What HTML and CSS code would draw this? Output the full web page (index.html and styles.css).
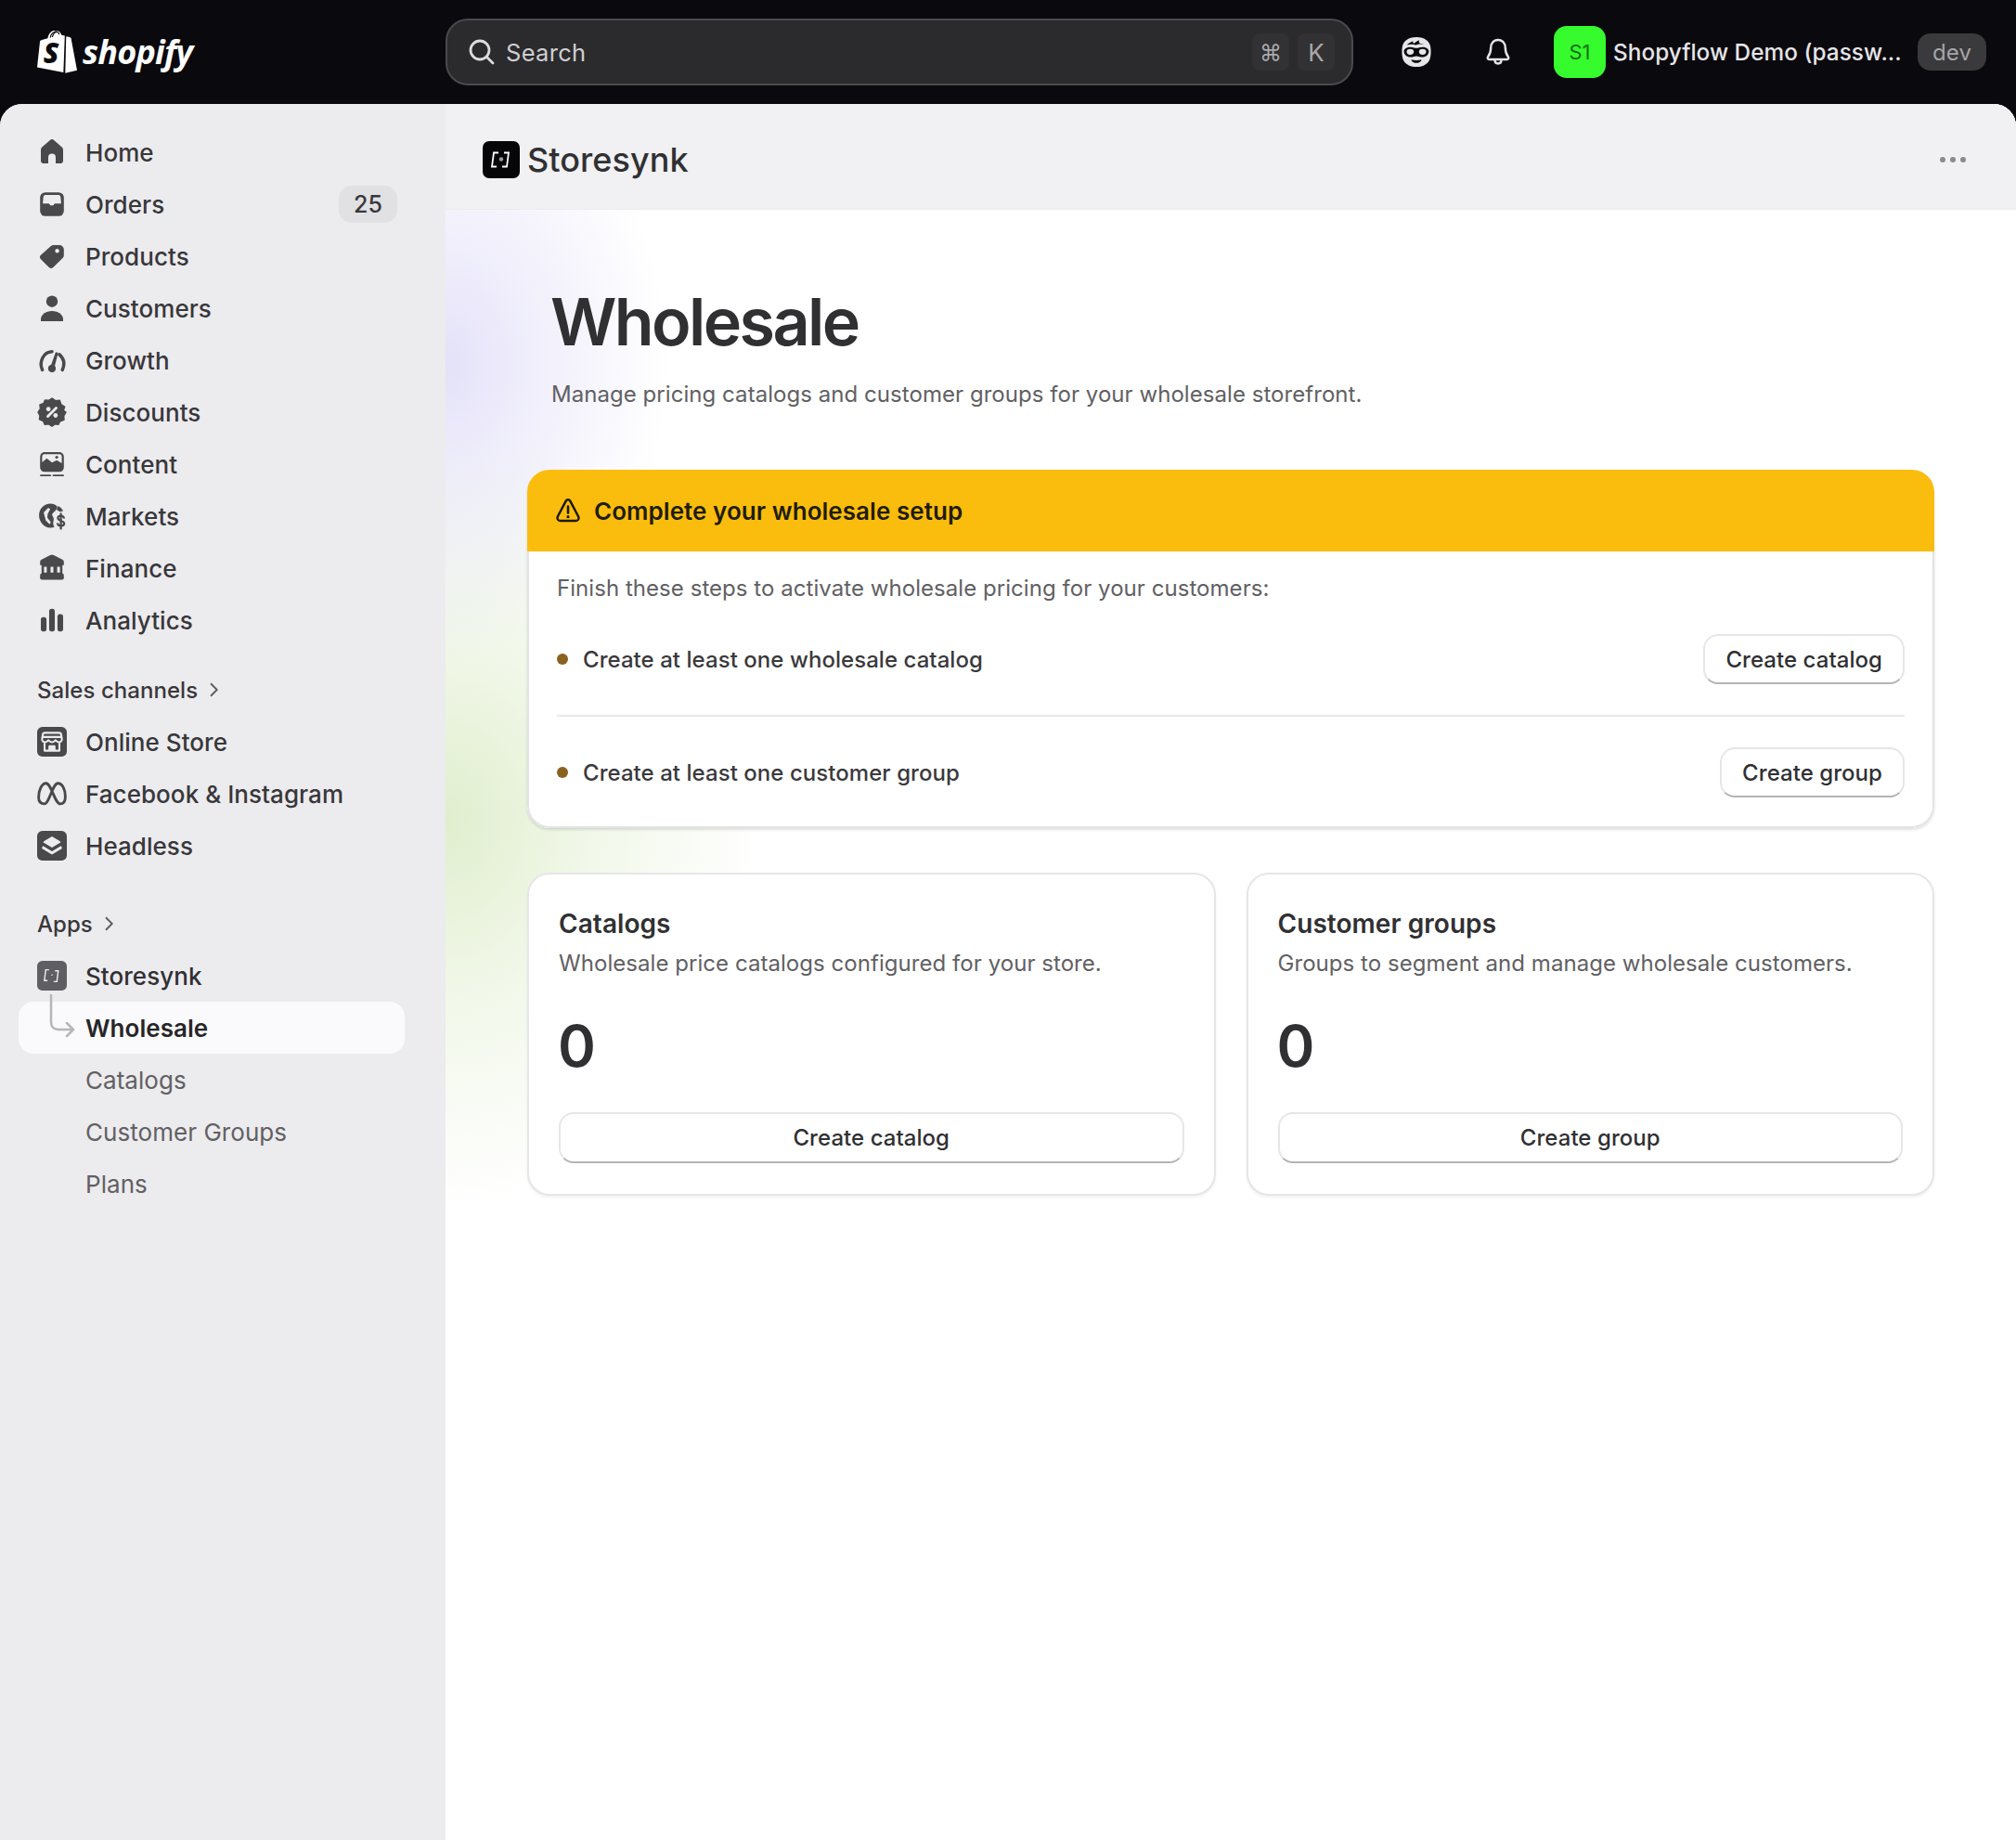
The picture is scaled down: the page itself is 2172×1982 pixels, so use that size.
FILE: index.html
```html
<!DOCTYPE html>
<html lang="en">
<head>
<meta charset="utf-8">
<title>Wholesale · Storesynk</title>
<link rel="stylesheet" href="styles.css">
</head>
<body>
<header class="topbar">
  <div class="brand">
    <svg class="brand-bag" viewBox="0 0 44 48"><path d="M30.500 6.600 27 5.800C26 3 24.300 1.200 22 1.200c-.6 0-.9.200-1.200.5C18.500-.5 13.500 1.500 11.600 9.300L5.300 11.300C3.300 11.900 3.300 12 3 13.900L0 41.500 29 47z" fill="#fff"/><path d="M32 7.400 36 8.200l1.400 1.200L44 44.700 31 47.800z" fill="#fff"/><path d="M14.500 8.800c1.200-4.800 3.700-6.800 6-6.500M24.500 5.200c-.5-1.500-1.300-2.800-2.700-2.800-2.500 0-4.300 2.600-5 5.600" fill="none" stroke="#0b0a0e" stroke-width="1.200"/><text x="7" y="37" class="brand-s">S</text></svg>
    <span class="brand-name">shopify</span>
  </div>
  <div class="search">
    <svg class="search-icon" viewBox="0 0 28 28"><circle cx="12" cy="12" r="10" fill="none" stroke="currentColor" stroke-width="2.800"/><path d="M19.500 19.500 26 26" stroke="currentColor" stroke-width="2.800" stroke-linecap="round"/></svg>
    <span class="search-label">Search</span>
    <span class="kbd">⌘</span>
    <span class="kbd kbd-key">K</span>
  </div>
  <svg class="top-icon sidekick" viewBox="3.500 .8 25 30.700" preserveAspectRatio="none"><path fill="#e6e5e8" d="M16 .8c7 0 11.500 4.500 12 11 .3 4 .3 7.500-.5 11C26.300 28 22 31.500 16 31.500S5.700 28 4.500 22.800c-.8-3.500-.8-7-.5-11C4.500 5.300 9 .8 16 .8Z"/><path fill="#0a090d" d="M5.500 15.500c0-2.800 2.500-4.500 5.500-4.500 2 0 3.500 1 5 1s3-1 5-1c3 0 5.500 1.700 5.500 4.500 0 3.500-2.500 6-5.500 6-2.200 0-3.500-1-5-1s-2.800 1-5 1c-3 0-5.500-2.500-5.500-6Z"/><circle cx="10.800" cy="16" r="3" fill="#e6e5e8"/><circle cx="21.200" cy="16" r="3" fill="#e6e5e8"/><path fill="#0a090d" d="M11.500 24c2.800 1 6.200 1 9 0-.8 2.500-2.500 3.500-4.500 3.500s-3.700-1-4.500-3.500ZM8 9c2-3 5-4 5-4l.5 2.500L18 4l.5 3 4 1.500c-3-1-5.500-.5-7 .5-2-1-5-1-7.500 0Z"/></svg>
  <svg class="top-icon bell" viewBox="0 0 32 32"><path fill="none" stroke="#e6e5e8" stroke-width="2.400" stroke-linejoin="round" d="M16 3c-5 0-7.800 4-7.800 8.500 0 5-1 7-3 9.500-1 1.300-.5 3 1.500 3h18.600c2 0 2.500-1.700 1.500-3-2-2.500-3-4.500-3-9.500C23.800 7 21 3 16 3Z"/><path fill="none" stroke="#e6e5e8" stroke-width="2.400" stroke-linecap="round" d="M12.500 24.500c0 2.500 1.500 4 3.500 4s3.500-1.500 3.500-4"/></svg>
  <div class="store">
    <span class="avatar">S1</span>
    <span class="store-name">Shopyflow Demo (passw...</span>
    <span class="dev">dev</span>
  </div>
</header>

<div class="shell">
  <aside class="sidebar">
    <nav class="nav-group">
      <a class="nav-item"><svg class="ico" viewBox="0 0 20 20"><path d="M8.500 2 3.300 6.600A2.500 2.500 0 0 0 2.500 8.400V16A1.500 1.500 0 0 0 4 17.500h3.500v-4a2.500 2.500 0 0 1 5 0v4H16a1.500 1.500 0 0 0 1.500-1.500V8.400a2.500 2.500 0 0 0-.8-1.800L11.500 2a2.200 2.200 0 0 0-3 0Z"/></svg>Home</a>
      <a class="nav-item"><svg class="ico" viewBox="0 0 20 20"><rect x="2" y="2" width="16" height="16" rx="3.500"/><path class="cut" d="M3.800 9.500 4.200 5c.1-1 .8-1.300 1.800-1.300h8c1 0 1.700.3 1.800 1.300l.4 4.500h-3.700c-.6 0-.9.200-1.200.7l-.4.600H8.900l-.4-.6c-.3-.5-.6-.7-1.200-.7Z"/></svg>Orders<span class="count">25</span></a>
      <a class="nav-item"><svg class="ico" viewBox="0 0 20 20"><path fill-rule="evenodd" d="M11.200 2.500H15A3 3 0 0 1 18 5.500v3.800a2.600 2.600 0 0 1-.8 1.900l-6.400 6.300a2 2 0 0 1-2.800 0l-5.500-5.500a2 2 0 0 1 0-2.800l6.800-6a3 3 0 0 1 1.900-.7ZM13.500 5a1.400 1.400 0 1 0 0 2.800 1.400 1.400 0 0 0 0-2.800Z"/></svg>Products</a>
      <a class="nav-item"><svg class="ico" viewBox="0 0 20 20"><circle cx="10" cy="5.400" r="3.900"/><path d="M2.500 18.800v-1.300c0-3.200 3.300-5.600 7.500-5.600s7.500 2.400 7.500 5.600v1.300Z"/></svg>Customers</a>
      <a class="nav-item"><svg class="ico" viewBox="0 0 20 20"><path class="line" d="M3.500 16.500C1 11 4.300 4.500 10 4.200M15 6.200c3.300 3 3.500 7 2 10.300" stroke-width="2.200"/><path d="M12.500 4.500 14.200 5 11.900 13.800A2.600 2.600 0 1 1 9.500 13Z"/></svg>Growth</a>
      <a class="nav-item"><svg class="ico" viewBox="0 0 20 20"><path d="M10 .8 12.300 2.400 15.100 2.200 16 4.900 18.400 6.400 17.500 9 19.200 10 17.800 12.600 18 15 15.400 16 14.200 18.200 11.800 17.900 10 19.300 8 17.900 5.300 18.200 4.200 15.900 1.700 14.800 2 12.200.8 10 2.300 7.800 2 5.100 4.500 4.100 5.400 2 8 2.200Z" stroke="#49484b" stroke-width="1.200" stroke-linejoin="round"/><path class="cut-line" d="M12.800 7.200 7.200 12.800" stroke-width="1.800"/><circle class="cut" cx="7.600" cy="7.900" r="1.500"/><circle class="cut" cx="12.400" cy="12.200" r="1.500"/></svg>Discounts</a>
      <a class="nav-item"><svg class="ico" viewBox="0 0 20 20"><rect x="2" y="1.900" width="16" height="13.300" rx="3"/><path class="cut" d="M3.400 8.800V4.800A1.500 1.500 0 0 1 4.900 3.300H15.100A1.500 1.500 0 0 1 16.600 4.800V9.400L13.200 7.400 10 8.900 6.500 6.100Z"/><circle cx="13.200" cy="5.300" r="1"/><path class="line" d="M2.500 17.600h6.300M11 17.600h6.500" stroke-width="1.200"/></svg>Content</a>
      <a class="nav-item"><svg class="ico" viewBox="0 0 20 20"><path d="M9 1.500C4.500 1.500 1.300 5 1.300 9.500S4.800 17.800 9 17.800c1 0 1.800-.2 2.600-.5-.6-1.200-1.100-2.600-.6-3.900.6-1.600-.3-3-.9-4-.3-.5.600-1.500 1.400-2.300 1-.9 2.100-2.200 2.100-3.700C12.400 2.300 10.800 1.500 9 1.500Z"/><path class="cut" d="M4.400 7.500 7.500 4.300l1.300 1L7.200 8.300 6.800 11 9.200 14 8.400 15.500 5.800 12.800Z"/><path class="line" d="M18 11c-.4-1-1-1.300-2-1.300-1.200 0-2 .6-2 1.600 0 2.300 4.200 1.300 4.200 3.600 0 1-.9 1.700-2.200 1.700-1.100 0-1.800-.5-2.200-1.400M16 8.300v10.200" stroke-width="1.400"/><path d="M14.200 3.200c1.700 1 2.600 2 3.300 3.300l-2.200.5-2.200-1.400Z"/></svg>Markets</a>
      <a class="nav-item"><svg class="ico" viewBox="0 0 20 20"><path d="M8.800 1.300 3 4.200C2.400 4.500 2 5.100 2 5.800V8h16V5.800c0-.7-.4-1.300-1-1.600L11.200 1.300a2.800 2.800 0 0 0-2.400 0Z"/><rect x="3" y="7.500" width="14" height="7"/><rect x="2" y="13.500" width="16" height="4.300" rx="1.300"/><path class="cut" d="M4.600 9h1.900v4H4.600Zm4.450 0h1.900v4h-1.900Zm4.450 0h1.900v4h-1.900Z"/></svg>Finance</a>
      <a class="nav-item"><svg class="ico" viewBox="0 0 20 20"><rect x="2.500" y="8" width="3.800" height="9.700" rx="1.700"/><rect x="8.100" y="2.300" width="3.800" height="15.400" rx="1.700"/><rect x="13.700" y="6" width="3.800" height="11.700" rx="1.700"/></svg>Analytics</a>
    </nav>

    <div class="nav-heading nav-heading-sales">Sales channels<svg class="chev" viewBox="0 0 12 12"><path d="M4 1.500 8.500 6 4 10.500"/></svg></div>
    <nav class="nav-group">
      <a class="nav-item"><svg class="ico" viewBox="0 0 20 20"><rect width="20" height="20" rx="3.500"/><path class="cut-line" d="M5.200 4h9.600c.9 0 1.300.5 1.400 1.200l.5 3c.1 1.300-1 2.100-2 2.100-1 0-1.700-.6-2.300-1.300-.6.700-1.400 1.300-2.400 1.300S8.200 9.700 7.600 9c-.6.700-1.300 1.300-2.300 1.300-1 0-2.100-.8-2-2.100l.5-3C3.900 4.500 4.300 4 5.200 4ZM3.800 6.800h12.400M5 10.500V16h10v-5.500" stroke-width="1.300"/><path class="cut" d="M7.600 16v-2.800c0-.5.400-.9.900-.9h3c.5 0 .9.400.9.900V16Z"/></svg>Online Store</a>
      <a class="nav-item"><svg class="ico" viewBox="0 0 20 20"><path class="line" d="M1 12.500C1 8 3 3 6 3c3.500 0 6 13.800 9.500 13.800 2 0 3.500-1.500 3.500-5 0-4.500-2-8.800-5-8.800-3.500 0-6 13.800-9 13.800C2.500 16.800 1 15.500 1 12.500Z" stroke-width="1.800"/></svg>Facebook &amp; Instagram</a>
      <a class="nav-item"><svg class="ico" viewBox="0 0 20 20"><rect width="20" height="20" rx="3.500"/><path class="cut" d="M10 3.800 15.500 7c.4.300.4.800 0 1l-5.500 3.200L4.500 8c-.4-.2-.4-.7 0-1Z"/><path class="cut" d="M4 10.200 10 13.700l6-3.500.6.900c.3.300.2.700-.1.900L10 16 3.500 12c-.3-.2-.4-.6-.1-.9Z"/></svg>Headless</a>
    </nav>

    <div class="nav-heading nav-heading-apps">Apps<svg class="chev" viewBox="0 0 12 12"><path d="M4 1.500 8.500 6 4 10.500"/></svg></div>
    <nav class="nav-group">
      <a class="nav-item nav-item-strong"><svg class="ico" viewBox="0 0 20 20"><rect width="20" height="20" rx="3.500" fill="#5f5e62"/><path class="app-mark" d="M8 6H5.800L4.900 13.300H7M12 6.700h2.200L13.300 14h-2.200" stroke-width=".9"/><circle class="cut" cx="10" cy="9.500" r=".5"/></svg>Storesynk</a>
      <a class="nav-item nav-item-active"><svg class="connector" viewBox="0 0 40 60"><path d="M2 0v30c0 5 3 8 8 8h15M19 31l7 7-7 7"/></svg>Wholesale</a>
      <a class="nav-item nav-item-sub">Catalogs</a>
      <a class="nav-item nav-item-sub">Customer Groups</a>
      <a class="nav-item nav-item-sub">Plans</a>
    </nav>
  </aside>

  <main class="main">
    <div class="app-bar">
      <svg class="app-logo" viewBox="0 0 40 40"><rect width="40" height="40" rx="7" fill="#060507"/><path d="M17 12.500h-5L10 27.500h5M23 12.500h5l-2 15h-5" fill="none" stroke="#fff" stroke-width="1.800"/><circle cx="20" cy="19.500" r="2.200" fill="#9c9c9e"/></svg>
      <span class="app-title">Storesynk</span>
      <span class="dots"><i></i><i></i><i></i></span>
    </div>
    <div class="page">
      <h1 class="page-title">Wholesale</h1>
      <p class="page-sub">Manage pricing catalogs and customer groups for your wholesale storefront.</p>

      <section class="setup">
        <div class="setup-head">
          <svg class="warn" viewBox="0 0 28 28"><path d="M11.600 3.800 2.800 20.500c-1 2 .3 4.500 2.700 4.500h17c2.400 0 3.700-2.500 2.700-4.500L16.400 3.800c-1-2-3.800-2-4.800 0Z" fill="none" stroke="#1d1a08" stroke-width="2.500" stroke-linejoin="round"/><path d="M14 9.500v7" stroke="#1d1a08" stroke-width="2.600" stroke-linecap="round"/><circle cx="14" cy="20.700" r="1.600" fill="#1d1a08"/></svg>
          Complete your wholesale setup
        </div>
        <div class="setup-body">
          <p class="setup-intro">Finish these steps to activate wholesale pricing for your customers:</p>
          <div class="step"><span class="dot"></span><span class="step-text">Create at least one wholesale catalog</span><button class="btn">Create catalog</button></div>
          <div class="step step-last"><span class="dot"></span><span class="step-text">Create at least one customer group</span><button class="btn">Create group</button></div>
        </div>
      </section>

      <div class="cards">
        <section class="card">
          <h2 class="card-title">Catalogs</h2>
          <p class="card-desc">Wholesale price catalogs configured for your store.</p>
          <div class="card-num">0</div>
          <button class="btn btn-full">Create catalog</button>
        </section>
        <section class="card">
          <h2 class="card-title">Customer groups</h2>
          <p class="card-desc">Groups to segment and manage wholesale customers.</p>
          <div class="card-num">0</div>
          <button class="btn btn-full">Create group</button>
        </section>
      </div>
    </div>
  </main>
</div>
</body>
</html>
```

FILE: styles.css
```css
* { box-sizing: border-box; }
html, body { margin: 0; height: 100%; }
body {
  display: flex;
  flex-direction: column;
  background: #0a090d;
  font-family: Inter, "Liberation Sans", sans-serif;
  font-size: 24px;
  letter-spacing: .05px;
  color: #303033;
  overflow: hidden;
}

/* top bar */
.topbar {
  flex: 0 0 112px;
  display: flex;
  align-items: center;
  padding-left: 40px;
}
.brand { width: 440px; display: flex; align-items: center; gap: 6px; height: 60px; padding-bottom: 2px; }
.brand-bag { width: 43px; height: 47px; }
.brand-s { font: italic 800 31px "Open Sans", sans-serif; fill: #0b0a0e; }
.brand-name { font: italic 700 36px "Open Sans", sans-serif; color: #fff; letter-spacing: -.8px; }
.search {
  width: 978px;
  height: 72px;
  border: 2px solid #4a494d;
  border-radius: 24px;
  background: #2b2a2d;
  color: #dcdbde;
  display: flex;
  align-items: center;
  padding: 0 18px 0 23px;
  gap: 9px;
}
.search-icon { width: 28px; height: 28px; margin-right: 3px; }
.search-label { flex: 1; font-size: 25.500px; color: #cfced1; letter-spacing: .3px; }
.kbd {
  width: 40px;
  height: 40px;
  border-radius: 8px;
  background: #323134;
  color: #a9a8ab;
  font-size: 24px;
  display: flex;
  align-items: center;
  justify-content: center;
}
.kbd-key { font-size: 26px; }
.top-icon { width: 32px; height: 32px; flex: none; }
.sidekick { margin-left: 52px; }
.bell { margin-left: 56px; }
.store { margin-left: 44px; display: flex; align-items: center; }
.avatar {
  width: 56px;
  height: 56px;
  border-radius: 14px;
  background: #36fc2e;
  color: #14700f;
  font-size: 22px;
  display: flex;
  align-items: center;
  justify-content: center;
}
.store-name { margin-left: 8px; width: 310px; color: #e6e5e8; font-size: 24.300px; font-weight: 500; white-space: nowrap; }
.dev {
  margin-left: 18px;
  width: 74px;
  height: 40px;
  border-radius: 14px;
  background: #3a393c;
  color: #a5a4a7;
  font-size: 24px;
  display: flex;
  align-items: center;
  justify-content: center;
}

/* shell */
.shell {
  flex: 1;
  display: flex;
  border-radius: 24px 24px 0 0;
  overflow: hidden;
  background: #fff;
}
.sidebar {
  flex: 0 0 480px;
  background: #ecebee;
  padding: 24px 44px 0 20px;
}
.nav-group { display: flex; flex-direction: column; }
.nav-item {
  position: relative;
  height: 56px;
  display: flex;
  align-items: center;
  gap: 20px;
  padding-left: 20px;
  color: #38373a;
  font-weight: 500;
  font-size: 26px;
}
.ico { width: 32px; height: 32px; flex: none; fill: #49484b; }
.ico .cut { fill: #ecebee; }
.ico .cut-line { fill: none; stroke: #ecebee; stroke-linecap: round; stroke-linejoin: round; }
.ico .line { fill: none; stroke: #49484b; stroke-linecap: round; stroke-linejoin: round; }
.ico .app-mark { fill: none; stroke: #ecebee; }
.count {
  margin-left: auto;
  margin-right: 8px;
  width: 63px;
  height: 40px;
  border-radius: 14px;
  background: #e1e0e3;
  display: flex;
  align-items: center;
  justify-content: center;
  font-size: 25px;
}
.nav-heading {
  height: 56px;
  display: flex;
  align-items: center;
  gap: 8px;
  padding-left: 20px;
  font-size: 24px;
  font-weight: 500;
  color: #38373a;
}
.nav-heading-sales { margin-top: 19px; }
.nav-heading-apps { margin-top: 28px; }
.chev { width: 18px; height: 18px; fill: none; stroke: #5a595c; stroke-width: 1.200; }
.nav-item-strong { color: #303033; }
.nav-item-active {
  padding-left: 72px;
  background: #faf9fb;
  border-radius: 16px;
  color: #262528;
  font-weight: 600;
}
.nav-item-sub { padding-left: 72px; color: #616063; font-weight: 400; }
.connector {
  position: absolute;
  left: 33px;
  top: -8px;
  width: 40px;
  height: 60px;
  fill: none;
  stroke: #b6b5b8;
  stroke-width: 2.500;
  stroke-linecap: round;
  stroke-linejoin: round;
}

/* main */
.main {
  flex: 1;
  display: flex;
  flex-direction: column;
  min-width: 0;
  background:
    radial-gradient(ellipse 240px 320px at 0 280px, rgba(214, 210, 245, .66), rgba(214, 210, 245, .36) 40%, rgba(214, 210, 245, 0) 100%),
    radial-gradient(ellipse 340px 420px at 0 770px, rgba(205, 228, 175, .62), rgba(205, 228, 175, .28) 45%, rgba(205, 228, 175, 0) 100%),
    #fff;
}
.app-bar {
  flex: 0 0 114px;
  display: flex;
  align-items: center;
  padding: 6px 54px 0 40px;
  background: #f1f0f3;
  border-bottom: 1px solid #ececee;
}
.app-logo { width: 40px; height: 40px; }
.app-title { margin-left: 8px; font-size: 36px; font-weight: 500; color: #303033; flex: 1; }
.dots { display: flex; gap: 5px; }
.dots i { width: 6px; height: 6px; border-radius: 50%; background: #8b8a8d; }

.page { padding: 81px 88px 0; }
.page-title {
  margin: 0 0 0 25px;
  font-size: 70px;
  line-height: 80px;
  font-weight: 600;
  letter-spacing: -2.600px;
  color: #303033;
}
.page-sub {
  margin: 20px 0 63px 26px;
  line-height: 36px;
  color: #616063;
}
.setup {
  border-radius: 24px;
  background: #fff;
  box-shadow: 0 2px 3px rgba(0, 0, 0, .12);
  overflow: hidden;
}
.setup-head {
  height: 88px;
  padding-left: 30px;
  display: flex;
  align-items: center;
  gap: 14px;
  background: #fabd0d;
  font-weight: 600;
  font-size: 26px;
  color: #1f1c0a;
}
.warn { width: 28px; height: 28px; }
.setup-body {
  padding: 22px 30px 0;
  border: 2px solid #e3e3e5;
  border-top: 0;
  border-radius: 0 0 24px 24px;
}
.setup-intro { margin: 0 0 31px; line-height: 36px; color: #616063; }
.step {
  display: flex;
  align-items: center;
  padding-bottom: 33px;
  border-bottom: 2px solid #e8e8ea;
  margin-bottom: 33px;
  font-weight: 500;
}
.step-last { border-bottom: 0; padding-bottom: 0; margin-bottom: 31px; }
.dot { width: 12px; height: 12px; border-radius: 50%; background: #8a6220; margin-right: 16px; }
.step-text { flex: 1; color: #3a393c; }
.btn {
  height: 54px;
  padding: 0 22px;
  border: 2px solid #e6e6e8;
  border-bottom-color: #b4b3b7;
  border-radius: 16px;
  background: #fff;
  font: 500 24px Inter, "Liberation Sans", sans-serif;
  letter-spacing: .05px;
  color: #303033;
}
.cards { margin-top: 48px; display: grid; grid-template-columns: 1fr 1fr; gap: 33px; }
.card {
  padding: 35px 32px 33px;
  border: 2px solid #e6e6e8;
  border-radius: 24px;
  background: #fff;
  box-shadow: 0 2px 3px rgba(0, 0, 0, .06);
}
.card-title { margin: 0; font-size: 28px; line-height: 36px; font-weight: 600; color: #303033; }
.card-desc { margin: 7px 0 0; line-height: 36px; color: #616063; }
.card-num { margin-top: 31px; margin-left: -1px; font-size: 62px; line-height: 80px; font-weight: 600; color: #303033; }
.btn-full { display: block; width: 100%; height: 55px; margin-top: 31px; }
```
